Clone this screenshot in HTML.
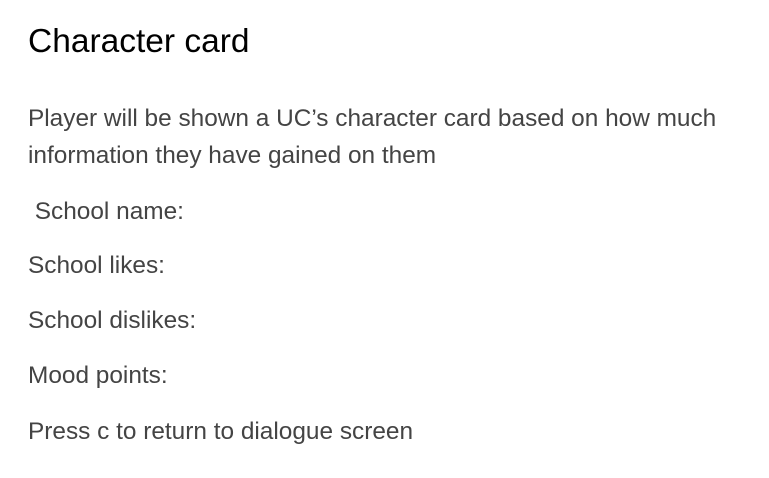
<!DOCTYPE html>
<html><head><meta charset="utf-8"><style>
body{margin:0;width:769px;height:478px;background:#fff;font-family:"Liberation Sans",sans-serif;overflow:hidden;position:relative}
h1{position:absolute;left:28px;top:22px;margin:0;font-size:33.5px;line-height:40px;font-weight:normal;color:#000;white-space:nowrap}
p{position:absolute;left:28px;margin:0;font-size:24.4px;color:#444;white-space:nowrap;line-height:26px}
</style></head><body>
<h1>Character card</h1>
<p style="top:106px">Player will be shown a UC’s character card based on how much</p>
<p style="top:143px">information they have gained on them</p>
<p style="top:199px">&nbsp;School name:</p>
<p style="top:253px">School likes:</p>
<p style="top:308px">School dislikes:</p>
<p style="top:363px">Mood points:</p>
<p style="top:419px">Press c to return to dialogue screen</p>
</body></html>
